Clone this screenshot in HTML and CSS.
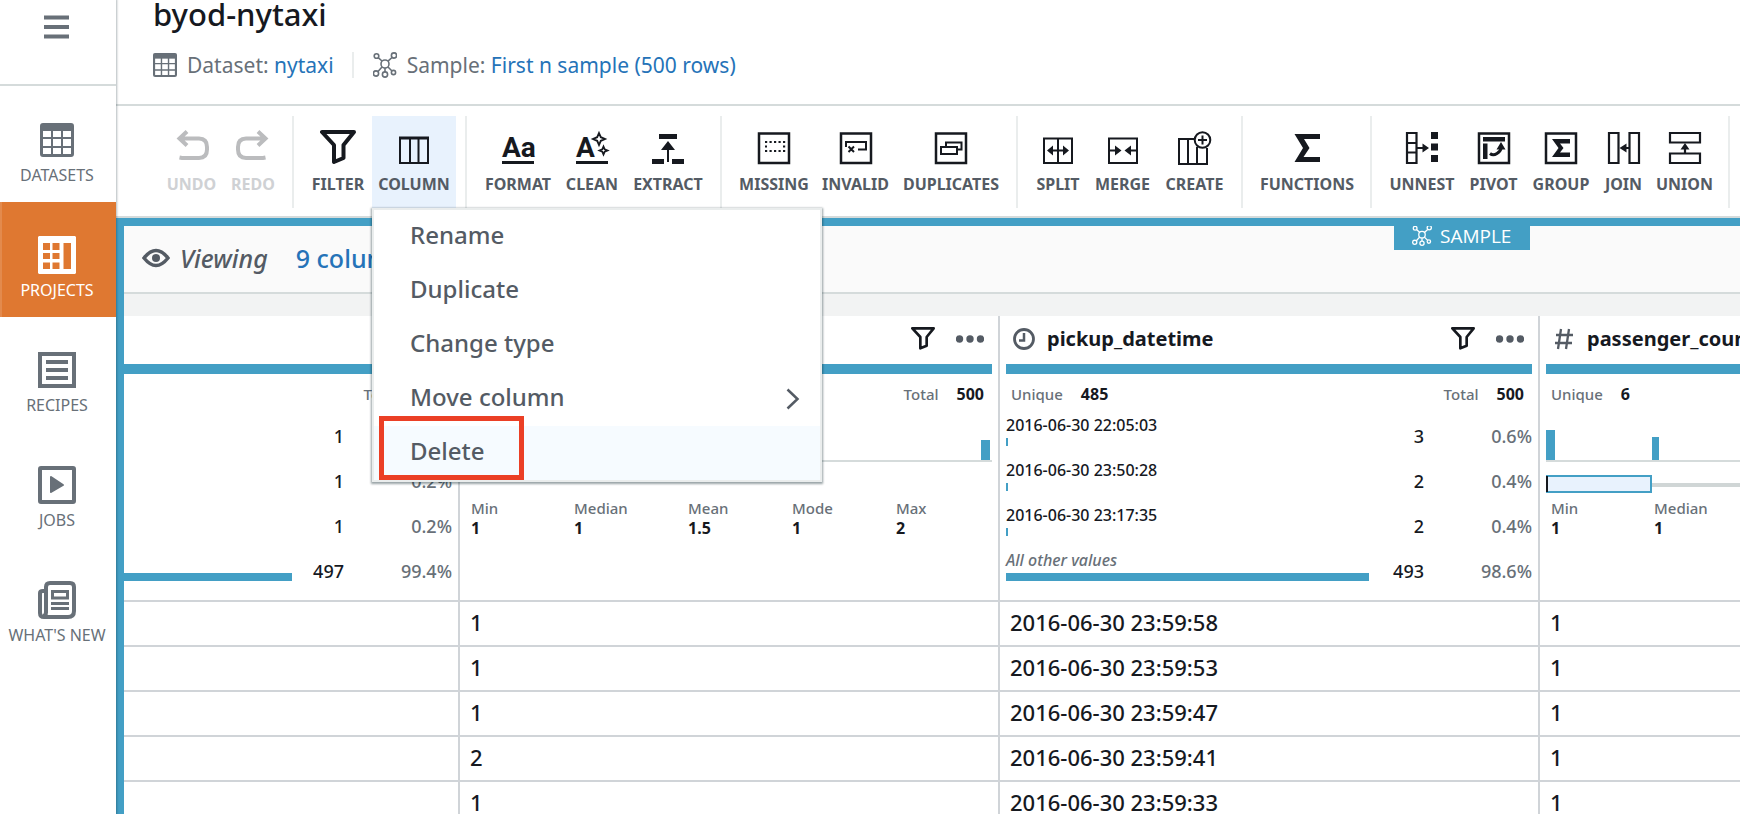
FILE: index.html
```html
<!DOCTYPE html>
<html lang="en">
<head>
<meta charset="utf-8">
<title>byod-nytaxi</title>
<link rel="stylesheet" href="styles.css">
</head>
<body>
<svg class="defs" aria-hidden="true">
  <symbol id="i-table" viewBox="0 0 34 34"><rect x="1.5" y="1.5" width="31" height="31" rx="1.5" fill="none" stroke="currentColor" stroke-width="3"/><path d="M1 1H33V8H1Z" fill="currentColor"/><path d="M2 15H32M2 24H32M12 7V32M22 7V32" stroke="currentColor" stroke-width="2" fill="none"/></symbol>
  <symbol id="i-sample" viewBox="0 0 24 26"><g fill="none" stroke="currentColor" stroke-width="1.6"><circle cx="12" cy="12" r="4"/><circle cx="3.500" cy="4" r="2.300"/><circle cx="21" cy="3.500" r="2.600"/><circle cx="3" cy="21.500" r="2.600"/><circle cx="12" cy="22.500" r="2.600"/><circle cx="20.500" cy="20.500" r="2.100"/><path d="M5.200 5.600L9 9M19 5.500L15 9.200M5 19.500L9 15M12 16V20M15 15L19 19"/></g></symbol>
  <symbol id="i-filter" viewBox="0 0 36 36"><path d="M2 2H34L23.500 15V28L14 32V15Z" fill="none" stroke="currentColor" stroke-width="4" stroke-linejoin="round"/></symbol>
  <symbol id="i-undo" viewBox="0 0 36 36"><path d="M13 1.500L5.500 8.500L13 15.500M6 8.500H25Q33 8.500 33 17V19.500Q33 28 25 28H8L5.500 27.500" fill="none" stroke="currentColor" stroke-width="4"/></symbol>
  <symbol id="i-sigma" viewBox="0 0 36 36"><path d="M5.500 4H31V9H15L20.500 18L14.500 27H31V32H5.500L14 18Z" fill="currentColor"/></symbol>
</svg>

<div class="app">
  <nav class="sidebar" aria-label="Main">
    <button class="menu-toggle" aria-label="Toggle navigation"><svg width="25" height="24" viewBox="0 0 25 24"><path d="M0 2.500H25M0 12H25M0 21.500H25" stroke="currentColor" stroke-width="4"/></svg></button>
    <a class="nav-item" href="#datasets"><svg class="nav-icon" viewBox="-2 -2 38 38"><use href="#i-table" width="34" height="34"/></svg>DATASETS</a>
    <a class="nav-item nav-active" href="#projects" aria-current="page"><svg class="nav-icon" viewBox="0 0 38 38"><path fill="currentColor" fill-rule="evenodd" d="M1 0H37L38 1V37L37 38H1L0 37V1ZM5 7V14H12V7ZM14.500 7V14H21.500V7ZM5 17V23H12V17ZM14.500 17V23H21.500V17ZM5 26.500V33H12V26.500ZM14.500 26.500V33H21.500V26.500ZM25.500 7V33H33V7Z"/></svg>PROJECTS</a>
    <a class="nav-item" href="#recipes"><svg class="nav-icon" viewBox="0 0 38 38"><path fill="none" stroke="currentColor" stroke-width="4" d="M2 3H36V35H2ZM8 11H30M8 19H30M8 27H30"/></svg>RECIPES</a>
    <a class="nav-item" href="#jobs"><svg class="nav-icon" viewBox="0 0 38 38"><rect x="2" y="2" width="34" height="34" rx="1" fill="none" stroke="currentColor" stroke-width="4"/><path d="M13 11L25 19L13 26Z" fill="currentColor" stroke="currentColor" stroke-width="2" stroke-linejoin="round"/></svg>JOBS</a>
    <a class="nav-item" href="#new"><svg class="nav-icon" viewBox="0 0 38 38"><path fill="none" stroke="currentColor" stroke-width="4" d="M8 32V6Q8 2 12 2H32Q36 2 36 6V30Q36 36 30 36H6Q2 36 2 32V12Q2 10 5 10H8M8 31Q8 35 5 35"/><path fill="none" stroke="currentColor" stroke-width="3" d="M14.500 10.500H29.500V17H14.500ZM13 22.500H31M13 27.500H31"/></svg>WHAT'S NEW</a>
  </nav>

  <main class="main">
    <header class="project-header">
      <h1 class="title">byod-nytaxi</h1>
      <div class="meta">
        <div class="meta-item"><svg width="24" height="24"><use href="#i-table"/></svg><span>Dataset: <a href="#nytaxi">nytaxi</a></span></div>
        <div class="meta-item"><svg width="24" height="26"><use href="#i-sample"/></svg><span>Sample: <a href="#sample">First n sample (500 rows)</a></span></div>
      </div>
    </header>

    <div class="toolbar" role="toolbar" aria-label="Transforms">
      <div class="group g-history">
        <button class="tool" disabled><svg class="tool-icon"><use href="#i-undo"/></svg>UNDO</button>
        <button class="tool" disabled><svg class="tool-icon flip"><use href="#i-undo"/></svg>REDO</button>
      </div>
      <div class="group g-column">
        <button class="tool"><svg class="tool-icon"><use href="#i-filter"/></svg>FILTER</button>
        <div class="menu-anchor">
          <button class="tool tool-open" aria-expanded="true"><svg class="tool-icon" viewBox="0 0 36 36"><path d="M4 8V33H32V8M14 8V33M22.500 8V33" fill="none" stroke="currentColor" stroke-width="2"/><path d="M3 8H33" stroke="currentColor" stroke-width="3"/></svg>COLUMN</button>
          <div class="menu" role="menu">
            <button class="menu-item" role="menuitem">Rename</button>
            <button class="menu-item" role="menuitem">Duplicate</button>
            <button class="menu-item" role="menuitem">Change type</button>
            <button class="menu-item" role="menuitem">Move column<svg class="chevron" width="14" height="22" viewBox="0 0 14 22"><path d="M1.500 1.500L11.500 11L1.500 20.500" fill="none" stroke="currentColor" stroke-width="2.500"/></svg></button>
            <button class="menu-item menu-hover" role="menuitem">Delete</button>
            <div class="callout"></div>
          </div>
        </div>
      </div>
      <div class="group g-format">
        <button class="tool"><svg class="tool-icon" viewBox="0 0 36 36"><text class="glyph" x="2" y="27">Aa</text><path d="M2 32.500H34" stroke="currentColor" stroke-width="3"/></svg>FORMAT</button>
        <button class="tool"><svg class="tool-icon" viewBox="0 0 36 36"><text class="glyph" x="2" y="27">A</text><path d="M2 32.500H34" stroke="currentColor" stroke-width="3"/><path d="M25 3L26.800 7.200L31 9L26.800 10.800L25 15L23.200 10.800L19 9L23.200 7.200ZM29.500 16.500L30.700 19.300L33.500 20.500L30.700 21.700L29.500 24.500L28.300 21.700L25.500 20.500L28.300 19.300Z" fill="none" stroke="currentColor" stroke-width="1.800"/></svg>CLEAN</button>
        <button class="tool"><svg class="tool-icon" viewBox="0 0 36 36"><path fill="currentColor" d="M9 4H27V9H9ZM18 11L25 20H19V32H17V20H11ZM2 29H14V34H2ZM22 29H34V34H22Z"/></svg>EXTRACT</button>
      </div>
      <div class="group g-quality">
        <button class="tool"><svg class="tool-icon" viewBox="0 0 36 36"><path d="M3 3.500H33V33H3Z" fill="none" stroke="currentColor" stroke-width="2.500"/><path d="M9 12H30M9 21H30M9 16.500H11M27 16.500H30" stroke="currentColor" stroke-width="2.200" stroke-dasharray="2.200 2.300"/></svg>MISSING</button>
        <button class="tool"><svg class="tool-icon" viewBox="0 0 36 36"><path d="M3 3.500H33V33H3Z" fill="none" stroke="currentColor" stroke-width="2.500"/><path d="M8 17V12H28V19.500H20M10.500 16.500L16 22M16 16.500L10.500 22" fill="none" stroke="currentColor" stroke-width="2"/></svg>INVALID</button>
        <button class="tool"><svg class="tool-icon" viewBox="0 0 36 36"><path d="M3 3.500H33V33H3Z" fill="none" stroke="currentColor" stroke-width="2.500"/><path d="M8 17H24V24H8ZM13 17V12.500H28.500V19.500H24" fill="none" stroke="currentColor" stroke-width="2"/></svg>DUPLICATES</button>
      </div>
      <div class="group g-structure">
        <button class="tool"><svg class="tool-icon" viewBox="0 0 36 36"><path d="M4 8.500H32V33H4ZM18 8V33M9 20.500H27" fill="none" stroke="currentColor" stroke-width="2"/><path d="M7 20.500L13 15.500V25.500ZM29 20.500L23 15.500V25.500Z" fill="currentColor"/></svg>SPLIT</button>
        <button class="tool"><svg class="tool-icon" viewBox="0 0 36 36"><path d="M4 8.500H32V33H4ZM4 20.500H12M24 20.500H32" fill="none" stroke="currentColor" stroke-width="2"/><path d="M16.500 20.500L10 15.500V25.500ZM19.500 20.500L26 15.500V25.500Z" fill="currentColor"/></svg>MERGE</button>
        <button class="tool"><svg class="tool-icon" viewBox="0 0 36 36"><path d="M17 9H2V34H30V18M11 9V34M20 17V34" fill="none" stroke="currentColor" stroke-width="2"/><circle cx="25.500" cy="10" r="7.800" fill="#fff" stroke="currentColor" stroke-width="2"/><path d="M25.500 5.500V14.500M21 10H30" stroke="currentColor" stroke-width="2"/></svg>CREATE</button>
      </div>
      <div class="group g-functions">
        <button class="tool"><svg class="tool-icon"><use href="#i-sigma"/></svg>FUNCTIONS</button>
      </div>
      <div class="group g-combine">
        <button class="tool"><svg class="tool-icon" viewBox="0 0 36 36"><path d="M3 3H12.500V33H3ZM3 13H12M3 22.500H12M13 18H20" fill="none" stroke="currentColor" stroke-width="2.200"/><path fill="currentColor" d="M18.500 13.500L25 18L18.500 22.500ZM27 2H34V9H27ZM27 13.500H34V20.500H27ZM27 25H34V32H27Z"/></svg>UNNEST</button>
        <button class="tool"><svg class="tool-icon" viewBox="0 0 36 36"><path d="M3 3.500H33V33H3Z" fill="none" stroke="currentColor" stroke-width="2.500"/><path fill="currentColor" d="M7 7H29V11.500H7ZM7 13.500H11.500V29H7ZM25 12L29.500 19.500H20.500Z"/><path d="M14 23.500Q17 26 21 23.500Q25 21 25 18" fill="none" stroke="currentColor" stroke-width="3"/></svg>PIVOT</button>
        <button class="tool"><svg class="tool-icon" viewBox="0 0 36 36"><path d="M3 3.500H33V33H3Z" fill="none" stroke="currentColor" stroke-width="2.500"/><path fill="currentColor" d="M9 9H27V13.500H17L20.500 18L17 22.500H27V27H9L15.500 18Z"/></svg>GROUP</button>
        <button class="tool"><svg class="tool-icon" viewBox="0 0 36 36"><path d="M3 3H12.500V33H3ZM23.500 3H33V33H23.500ZM18 18H23" fill="none" stroke="currentColor" stroke-width="2.200"/><path fill="currentColor" d="M13.500 18L20.500 13.500V22.500Z"/></svg>JOIN</button>
        <button class="tool"><svg class="tool-icon" viewBox="0 0 36 36"><path d="M3 3H33V12.500H3ZM3 23.500H33V33H3ZM18 18V23" fill="none" stroke="currentColor" stroke-width="2.200"/><path fill="currentColor" d="M18 13L22.500 19.500H13.500Z"/></svg>UNION</button>
      </div>
    </div>

    <section class="viewer">
      <div class="viewing">
        <svg width="28" height="20" viewBox="0 0 28 20"><path d="M2 10Q14 -5 26 10Q14 25 2 10Z" fill="none" stroke="currentColor" stroke-width="3.500"/><circle cx="14" cy="10" r="4" fill="currentColor"/></svg>
        <em>Viewing</em>
        <a href="#columns">9 columns</a>
      </div>
      <div class="sample-tab"><svg width="20" height="21"><use href="#i-sample"/></svg>SAMPLE</div>

      <div class="grid-scroll">
        <table class="data">
          <colgroup><col class="c-first"><col class="c-full"><col class="c-full"><col class="c-full"></colgroup>
          <thead>
            <tr>
              <th class="flush"><div class="col-head"></div></th>
              <th><div class="col-head"><span class="spacer"></span><button class="head-btn" aria-label="Filter"><svg width="24" height="24"><use href="#i-filter"/></svg></button><button class="head-btn" aria-label="More"><svg width="28" height="8"><g fill="currentColor"><circle cx="3.500" cy="4" r="3.700"/><circle cx="14" cy="4" r="3.700"/><circle cx="24.500" cy="4" r="3.700"/></g></svg></button></div></th>
              <th><div class="col-head"><svg class="type" width="22" height="24" viewBox="0 0 22 24"><circle cx="11" cy="12" r="9.500" fill="none" stroke="currentColor" stroke-width="2.800"/><path d="M11 6V13.500H6" fill="none" stroke="currentColor" stroke-width="2.500"/></svg><span class="col-name">pickup_datetime</span><span class="spacer"></span><button class="head-btn" aria-label="Filter"><svg width="24" height="24"><use href="#i-filter"/></svg></button><button class="head-btn" aria-label="More"><svg width="28" height="8"><g fill="currentColor"><circle cx="3.500" cy="4" r="3.700"/><circle cx="14" cy="4" r="3.700"/><circle cx="24.500" cy="4" r="3.700"/></g></svg></button></div></th>
              <th><div class="col-head"><svg class="type" width="22" height="24" viewBox="0 0 22 24"><path d="M8 2L5 22M16 2L13 22M3 8H20M2 16H19" fill="none" stroke="currentColor" stroke-width="2.300"/></svg><span class="col-name">passenger_count</span></div></th>
            </tr>
            <tr class="profile">
              <td class="flush">
                <div class="totals"><span class="spacer"></span><span>Total</span><b>500</b></div>
                <div class="values">
                  <div class="value"><div class="value-name"></div><span>1</span><span class="pct">0.2%</span></div>
                  <div class="value"><div class="value-name"></div><span>1</span><span class="pct">0.2%</span></div>
                  <div class="value"><div class="value-name"></div><span>1</span><span class="pct">0.2%</span></div>
                  <div class="value"><div class="value-name"><i></i><div class="bar" style="width:99%"></div></div><span>497</span><span class="pct">99.4%</span></div>
                </div>
              </td>
              <td>
                <div class="totals"><span>Unique</span><b>2</b><span class="spacer"></span><span>Total</span><b>500</b></div>
                <svg class="histogram" width="526" height="84"><rect x="515" y="26" width="9" height="20" fill="#439fc5"/><path d="M0 47H526" stroke="#d5dbdb" stroke-width="2"/></svg>
                <dl class="stats"><div><dt>Min</dt><dd>1</dd></div><div><dt>Median</dt><dd>1</dd></div><div><dt>Mean</dt><dd>1.5</dd></div><div><dt>Mode</dt><dd>1</dd></div><div><dt>Max</dt><dd>2</dd></div></dl>
              </td>
              <td>
                <div class="totals"><span>Unique</span><b>485</b><span class="spacer"></span><span>Total</span><b>500</b></div>
                <div class="values">
                  <div class="value"><div class="value-name"><span>2016-06-30 22:05:03</span><div class="bar" style="width:0.6%"></div></div><span>3</span><span class="pct">0.6%</span></div>
                  <div class="value"><div class="value-name"><span>2016-06-30 23:50:28</span><div class="bar" style="width:0.4%"></div></div><span>2</span><span class="pct">0.4%</span></div>
                  <div class="value"><div class="value-name"><span>2016-06-30 23:17:35</span><div class="bar" style="width:0.4%"></div></div><span>2</span><span class="pct">0.4%</span></div>
                  <div class="value"><div class="value-name"><i>All other values</i><div class="bar" style="width:98.6%"></div></div><span>493</span><span class="pct">98.6%</span></div>
                </div>
              </td>
              <td>
                <div class="totals"><span>Unique</span><b>6</b></div>
                <svg class="histogram" width="526" height="84"><path d="M0 16H9V46H0ZM106 23H113V46H106Z" fill="#439fc5"/><path d="M0 47H526" stroke="#d5dbdb" stroke-width="2"/><path d="M106 71H526" stroke="#d0d6d6" stroke-width="4"/><rect x="1" y="62" width="104" height="16" fill="#e8f2fd" stroke="#439fc5" stroke-width="2"/><path d="M1 62V78" stroke="#16191f" stroke-width="2"/></svg>
                <dl class="stats"><div><dt>Min</dt><dd>1</dd></div><div><dt>Median</dt><dd>1</dd></div></dl>
              </td>
            </tr>
          </thead>
          <tbody>
            <tr><td></td><td>1</td><td>2016-06-30 23:59:58</td><td>1</td></tr>
            <tr><td></td><td>1</td><td>2016-06-30 23:59:53</td><td>1</td></tr>
            <tr><td></td><td>1</td><td>2016-06-30 23:59:47</td><td>1</td></tr>
            <tr><td></td><td>2</td><td>2016-06-30 23:59:41</td><td>1</td></tr>
            <tr><td></td><td>1</td><td>2016-06-30 23:59:33</td><td>1</td></tr>
          </tbody>
        </table>
      </div>
    </section>
  </main>
</div>
</body>
</html>
```

FILE: styles.css
```css
* { box-sizing: border-box; }

body {
  margin: 0;
  font-family: "Noto Sans", "Open Sans", sans-serif;
  font-weight: 500;
  color: #16191f;
  background: #fff;
}

button {
  font: inherit;
  color: inherit;
  background: none;
  border: 0;
  padding: 0;
}

a { color: #2573b8; text-decoration: none; }
svg { display: block; flex: none; }
.defs { position: absolute; width: 0; height: 0; }
.spacer { flex: 1; }

.app {
  display: flex;
  height: 100vh;
  overflow: hidden;
}

/* Sidebar */
.sidebar {
  flex: none;
  width: 116px;
  z-index: 2;
  color: #687078;
  background: #fff;
  box-shadow: 0 0 2px 1px rgba(0, 28, 36, 0.3);
}
.menu-toggle {
  display: flex;
  justify-content: center;
  width: 100%;
  height: 86px;
  margin-bottom: 1px;
  padding: 15px 4px 0 0;
  border-bottom: 2px solid #d5dbdb;
}
.nav-item {
  display: flex;
  flex-direction: column;
  align-items: center;
  gap: 5px;
  height: 115px;
  padding: 34px 2px 0 0;
  font-size: 16px;
  line-height: 22px;
  font-weight: 400;
  white-space: nowrap;
  color: #687078;
}
.nav-icon { width: 38px; height: 38px; }
.nav-active {
  padding-right: 4px;
  color: #fff;
  background: #df7831;
  border-left: 2px solid #e38a4d;
}

/* Header */
.main {
  flex: 1;
  min-width: 0;
  display: flex;
  flex-direction: column;
}
.project-header {
  height: 106px;
  padding-left: 37px;
  border-bottom: 2px solid #d5dbdb;
}
.title {
  margin: 0;
  font-size: 31px;
  line-height: 28px;
  font-weight: 500;
}
.meta {
  display: flex;
  margin-top: 24px;
  font-size: 21px;
  line-height: 26px;
  font-weight: 400;
  color: #687078;
}
.meta-item {
  display: flex;
  align-items: center;
  gap: 10px;
}
.meta-item + .meta-item {
  margin-left: 18px;
  padding-left: 19px;
  border-left: 2px solid #eaeded;
}

/* Toolbar */
.toolbar {
  display: flex;
  height: 112px;
  padding: 10px 0 8px 34px;
  border-bottom: 2px solid #d5dbdb;
}
.group {
  display: grid;
  flex: none;
  height: 92px;
  padding: 0 9px 0 10px;
  border-right: 2px solid #eaeded;
}
.g-history { grid-template-columns: 63px 60px; }
.g-column { grid-template-columns: 68px 84px; }
.g-format { grid-template-columns: 82px 66px 86px; }
.g-quality { grid-template-columns: 84px 79px 112px; }
.g-structure { grid-template-columns: 60px 69px 75px; }
.g-functions { grid-template-columns: 108px; }
.g-combine { grid-template-columns: 80px 63px 72px 53px 69px; }

.tool {
  display: flex;
  flex-direction: column;
  align-items: center;
  gap: 7px;
  width: 100%;
  height: 92px;
  padding-top: 14px;
  font-size: 16px;
  line-height: 22px;
  font-weight: 700;
  color: #545b64;
}
.tool-icon { width: 36px; height: 36px; color: #16191f; }
.tool:disabled { color: #cfd1d4; }
.tool:disabled .tool-icon { color: #bbbcbe; }
.tool-open { background: #e8f2fd; }
.flip { transform: scaleX(-1); }
.glyph {
  font-family: Roboto, "Noto Sans", sans-serif;
  font-size: 28px;
  font-weight: 700;
  fill: currentColor;
}

/* Column menu */
.menu-anchor { position: relative; }
.menu {
  position: absolute;
  top: 92px;
  left: 0;
  z-index: 5;
  width: 450px;
  background: #fff;
  border: 2px solid #eaeded;
  box-shadow: 0 1px 2px 1px rgba(0, 28, 36, 0.4);
}
.menu-item {
  display: flex;
  align-items: center;
  justify-content: space-between;
  width: 100%;
  height: 54px;
  padding: 0 20px 5px 36px;
  font-size: 24px;
  color: #545b64;
}
.chevron { margin-top: 5px; }
.menu-hover { background: #f6fbff; }
.callout {
  position: absolute;
  left: 5px;
  bottom: 0;
  width: 145px;
  height: 64px;
  border: 5px solid #eb3f25;
}

/* Grid viewer */
.viewer {
  position: relative;
  flex: 1;
  min-height: 0;
  overflow: hidden;
  border: solid #439fc5;
  border-width: 8px 0 0 8px;
}
.viewing {
  display: flex;
  align-items: center;
  height: 68px;
  padding: 0 0 2px 18px;
  font-size: 25px;
  color: #545b64;
  background: #fafafa;
  border-bottom: 2px solid #d5dbdb;
}
.viewing em { margin: 0 28px 0 10px; }
.sample-tab {
  position: absolute;
  top: -8px;
  right: 210px;
  display: flex;
  align-items: flex-end;
  gap: 8px;
  width: 136px;
  height: 32px;
  padding: 0 0 4px 18px;
  font-family: "Open Sans", "Noto Sans", sans-serif;
  font-size: 19px;
  line-height: 20px;
  font-weight: 400;
  color: #fff;
  background: #439fc5;
}
.grid-scroll {
  padding-top: 22px;
  overflow: hidden;
  background: #f2f3f3;
}

.data {
  width: 1956px;
  table-layout: fixed;
  border-spacing: 0;
  background: #fff;
}
.c-first { width: 336px; }
.c-full { width: 540px; }
.data th, .data td {
  padding: 0 6px;
  border-right: 2px solid #d0d4d8;
  text-align: left;
}
.data .flush { padding-left: 0; }
.col-head {
  display: flex;
  align-items: center;
  gap: 12px;
  height: 58px;
  padding: 0 8px 2px 7px;
  font-size: 20px;
  border-bottom: 10px solid #439fc5;
}
.col-head .type { color: #545b64; }
.col-name { padding-bottom: 2px; }
.head-btn { color: #545b64; margin-left: 9px; }
.head-btn:first-of-type { color: #16191f; }

.profile td {
  height: 228px;
  vertical-align: top;
  border-bottom: 2px solid #d0d4d8;
}
.totals {
  display: flex;
  gap: 18px;
  height: 40px;
  padding: 0 8px 0 5px;
  font-size: 15px;
  line-height: 40px;
  color: #687078;
}
.totals b { font-size: 16px; color: #16191f; }
.value {
  display: grid;
  grid-template-columns: 1fr 50px 108px;
  height: 45px;
  font-size: 18px;
  line-height: 44px;
  text-align: right;
}
.value-name {
  display: flex;
  flex-direction: column;
  font-size: 16px;
  line-height: 22px;
  text-align: left;
}
.value-name span, .value-name i { height: 24px; }
.value-name i { color: #687078; }
.pct { color: #687078; }
.bar { height: 8px; min-width: 2px; background: #439fc5; }

.histogram { width: 100%; }
.stats {
  display: grid;
  grid-template-columns: 103px 114px 104px 104px 1fr;
  margin: 0;
  padding: 0 5px;
  font-size: 15px;
  line-height: 20px;
}
.stats dt { color: #687078; }
.stats dd { margin: 0; font-size: 16px; font-weight: 700; }

.data tbody td {
  height: 45px;
  padding: 0 10px 4px;
  font-size: 22px;
  line-height: 30px;
  border-bottom: 2px solid #d0d4d8;
}
```
